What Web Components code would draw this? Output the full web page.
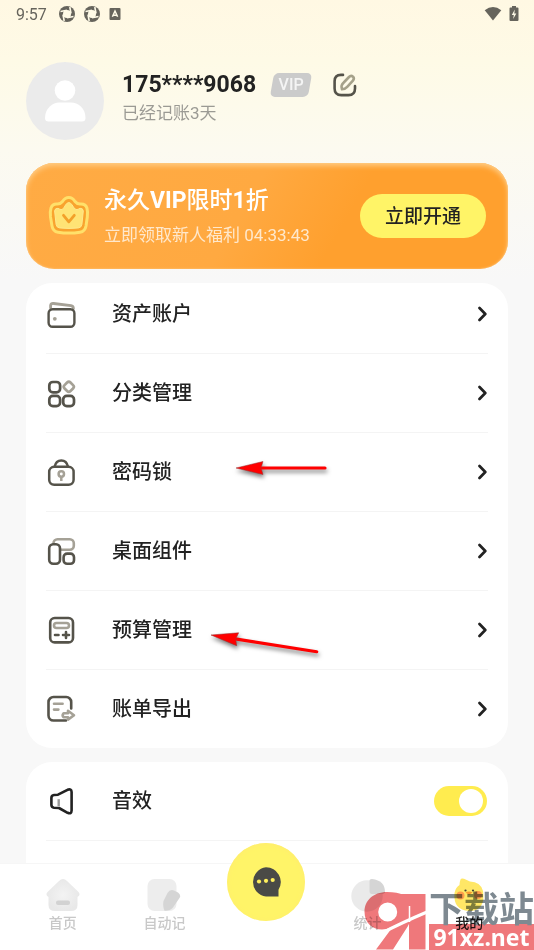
<!DOCTYPE html>
<html lang="zh-CN">
<head>
<meta charset="utf-8">
<meta name="viewport" content="width=device-width, initial-scale=1">
<title>我的</title>
<style>
  html, body { margin: 0; height: 100%; }
  body { font-family: Roboto, "Noto Sans CJK SC", sans-serif; color: #222; background: #f8f8f8; }
</style>
</head>
<body>
<profile-page></profile-page>
<script>
const ICONS = {
  wallet: [30, 30, `<g fill="none" stroke-width="2.4" stroke-linecap="round"><path d="M4.600 9V6.500Q5 4.200 7.600 4.500L25 6.600Q27.300 7 27.400 9.500" stroke="#a5a196" stroke-width="2.800"/><rect x="2.600" y="10.200" width="25.800" height="17.600" rx="4" stroke="#55534a" fill="#fff"/></g><circle cx="8.800" cy="19.800" r="1.900" fill="#a5a196"/>`],
  grid: [30, 30, `<g fill="none" stroke="#55534a" stroke-width="2.700"><rect x="3.300" y="4" width="10.800" height="10.400" rx="3.600"/><rect x="3.300" y="17.800" width="10.800" height="10.400" rx="3.600"/><rect x="17.200" y="17.800" width="10.800" height="10.400" rx="3.600"/><rect x="18.600" y="4.600" width="8.400" height="8.400" rx="2.400" stroke="#a5a196" transform="rotate(45 22.800 8.800)"/></g>`],
  lock: [30, 30, `<g fill="none" stroke="#55534a" stroke-width="2.500"><path d="M8.600 9.800C9.500 5.500 12 3.400 15.300 3.400S21.100 5.500 22 9.800"/><rect x="3.200" y="9.800" width="24.400" height="18" rx="5"/><g stroke="#a5a196"><circle cx="15.300" cy="17" r="2.700"/><path d="M15.300 19.500V24"/></g></g>`],
  widgets: [30, 30, `<g fill="none" stroke-width="2.600"><rect x="7.500" y="3.200" width="20.300" height="10.600" rx="4" stroke="#a5a196"/><g stroke="#55534a" fill="#fff"><rect x="3.200" y="8.200" width="10.800" height="19.600" rx="4"/><rect x="17.600" y="17.600" width="10.400" height="10.200" rx="3.600"/></g></g>`],
  budget: [30, 30, `<g fill="none" stroke="#55534a" stroke-width="2.600" stroke-linecap="round"><rect x="4.200" y="3" width="22.800" height="24.400" rx="4.500"/><rect x="8" y="8" width="15" height="5" rx="2.500" stroke="#a5a196"/><path d="M9 20h3.500M17 20h6M20 17v6"/></g>`],
  exportbill: [30, 30, `<g fill="none" stroke-width="2.600" stroke-linecap="round" stroke-linejoin="round"><path d="M25.200 14.500V8a5 5 0 0 0-5-5H7.500a5 5 0 0 0-5 5v13.500a5 5 0 0 0 5 5H20" stroke="#55534a"/><path d="M8 9.800h8.600M8 15.600h4.400" stroke="#a5a196"/><path d="M17.500 19.300h4.500v-2.500l6 4.400-6 4.400v-2.400h-4.500q-1.700-1.900 0-3.900z" stroke="#a5a196"/></g>`],
  sound: [30, 30, `<path d="M5.400 12Q5.400 9.200 8 9L12 8.700 21.500 3.800Q25.500 2.400 25.600 6V24.500Q25.500 28.400 21.600 26.800L13 22 8 21.800Q5.500 21.500 5.400 19z" fill="none" stroke="#222" stroke-width="2.600" stroke-linejoin="round"/><path d="M12.700 13.200v7" stroke="#999" stroke-width="2.400"/>`],
  chevron: [10, 16, `<path d="M1.500 2L7.300 8L1.500 14" fill="none" stroke="#222" stroke-width="2.700" stroke-linecap="round" stroke-linejoin="round"/>`],
  aperture: [16, 16, `<circle cx="8" cy="8" r="8" fill="#66645c"/><circle cx="8" cy="8" r="4" fill="#fefae7"/><path d="M1.500 5.500L8 4.200M10.800 1L12 7.500M14.500 10.500L8 11.800M5.200 15L4 8.500" stroke="#fefae7" stroke-width="1.600"/>`],
  badgea: [12, 12, `<rect width="11" height="12" x=".5" rx="1" fill="#66645c"/><path d="M3.400 8.800L6 3l2.600 5.800M4.400 7.200h3.200" fill="none" stroke="#fefae7" stroke-width="1.500"/>`],
  wifi: [18, 16, `<path d="M.7 4.200Q9-2.400 17.300 4.200L9 14.600z" fill="#66645c"/>`],
  battery: [10, 16, `<path d="M3 0h4v1.500h1.500q1 0 1 1V14q0 1-1 1h-7q-1 0-1-1V2.500q0-1 1-1H3z" fill="#66645c"/><path d="M5.800 3.500L2.800 9h2l-.6 4L7.300 7.500h-2z" fill="#fefae7"/>`],
  edit: [26, 26, `<g fill="none" stroke-width="2.600" stroke-linecap="round"><path d="M11 2.900H9Q2.600 2.900 2.600 9.300V16.500Q2.600 23.100 9.300 23.100H16.500Q23 23.100 23 16.500V14" stroke="#55534a"/><path d="M10 17.200Q8.500 13.500 11.500 10.700L17 5Q19 3 21 4.700 22.700 6.500 20.900 8.700L15.200 14.800Q13 17.200 10 17.200z" stroke="#a5a18a"/></g>`],
  avatar: [78, 78, `<circle cx="39" cy="39" r="39" fill="#ebebeb"/><circle cx="39" cy="28.500" r="10.300" fill="#fff"/><path d="M19 56C19 46 27 40.500 33 40.500H45C52 40.500 59.500 46 59.500 56Q59.500 59.500 56 59.500H22.500Q19 59.500 19 56z" fill="#fff"/>`],
  crown: [44, 42, `<g stroke-linejoin="round"><path d="M4 13Q5.500 8.500 10.500 9Q13.500 9 15.500 6.500Q18 2.500 21.800 2.500Q25.600 2.500 28 6.500Q30 9 33 9Q38.500 8.500 39.900 13Q41 17 40.300 22L39 31Q38 36.500 33 37.200Q22 39 11 37.200Q6 36.500 5 31L3.500 22Q2.800 17 4 13z" fill="#f9a32e" stroke="#ffe06a" stroke-width="3"/><path d="M7.600 16Q8 13 11 13.300Q13 14.800 15 14.500Q17 13.500 18.500 10Q21.800 5 25.200 10Q26.800 13.500 29 14.500Q31 14.800 33 13.300Q36 13 36.300 16L34.900 29.500Q34.500 32.500 31.500 32.900Q22 34 12.500 32.900Q9.500 32.500 9.100 29.500z" fill="#ffe375" stroke="#ffe98c" stroke-width="1"/></g><path d="M16.500 20.300L21.800 26.800L27.300 20.300" fill="none" stroke="#f3a029" stroke-width="2.800" stroke-linecap="round" stroke-linejoin="round"/>`],
  home: [34, 34, `<defs><radialGradient id="h"><stop offset="0" stop-color="#f3f3f3"/><stop offset="1" stop-color="#e8e8e8"/></radialGradient></defs><path d="M17 1Q19 1 21 3L32.500 14Q35 17 31.500 19V27Q31.500 33 25 33H9Q2.500 33 2.500 27V19Q-1 17 1.500 14L13 3Q15 1 17 1z" fill="url(#h)"/><rect x="10" y="22.500" width="14" height="4.500" rx="2" fill="#d2d2d2"/>`],
  note: [34, 34, `<rect x=".5" y="1" width="29" height="32" rx="7" fill="#ededed"/><path d="M20.500 15Q23 11 27 12.500L31 14.500Q34.500 17 32.500 20L26 29.500Q23 33 17.500 32.800Q15.500 28 16.500 23z" fill="#d5d5d5"/>`],
  chart: [34, 34, `<circle cx="16" cy="18" r="15.700" fill="#eaeaea"/><path d="M18.500 2.500Q18.500 .8 21 .9Q34 2.500 34 14Q33.500 16 30 16H21Q18.500 16 18.500 13z" fill="#d5d5d5"/>`],
  duck: [34, 34, `<path d="M8.500 1.500Q9 .2 12 .8L18 3.500Q28.500 3.600 31 13Q34 33 17 33Q1 32 2.500 15Q3.500 9.500 7.500 7Q7.500 4 8.500 1.500z" fill="#ffe766"/><circle cx="8.500" cy="17.500" r="4" fill="#ff9c4b"/><circle cx="26" cy="17" r="4" fill="#ff9c4b"/><path d="M13.500 14.500Q17 12.500 20.500 14.500L17 17z" fill="#f79a31"/><circle cx="13.500" cy="12.500" r="1.100" fill="#443"/><circle cx="21" cy="12.500" r="1.100" fill="#443"/>`],
  chat: [30, 30, `<path d="M15 .3A14.700 14.700 0 0 0 15 29.500H27.500V22.700A14.700 14.700 0 0 0 15 .3z" fill="#4a4a46"/><g fill="#ffef5d"><circle cx="8" cy="14.500" r="2.100"/><circle cx="15" cy="13.800" r="2.100"/><circle cx="21.700" cy="13" r="2.100"/></g>`],
  mark91: [64, 60, `<g fill="#ef787b"><path fill-rule="evenodd" d="M24 2C10 2 1.500 11 1.500 21.500C1.500 33 9 39.500 19 39.500Q25 39 30 36.500L13 59.500H30L45 36Q51 25 49 15Q45 2 24 2zM24.700 12.500A9.500 9.500 0 1 1 24.700 31.500A9.500 9.500 0 1 1 24.700 12.500z"/><path d="M37 4H62.500V59.500H46V18Q42 9 37 4z"/></g><path d="M18 43.500Q38 33 64 22" fill="none" stroke="#fff" stroke-width="3"/><path d="M46.500 16V32" stroke="#fff" stroke-width="1.500"/>`]
};

function define(name, html, setup) {
  const tpl = document.createElement('template');
  tpl.innerHTML = html;
  customElements.define(name, class extends HTMLElement {
    constructor() {
      super();
      this.attachShadow({ mode: 'open' }).append(tpl.content.cloneNode(true));
    }
    connectedCallback() { if (setup) setup(this, this.shadowRoot); }
  });
}

define('ui-icon', `<style>:host{display:block;flex:none} svg{display:block}</style>`, (el, root) => {
  const [w, h, body] = ICONS[el.getAttribute('name')];
  if (!root.querySelector('svg')) root.innerHTML += `<svg width="${w}" height="${h}" viewBox="0 0 ${w} ${h}" aria-hidden="true">${body}</svg>`;
});

define('status-bar', `
<style>
  :host { display: flex; justify-content: space-between; align-items: center; height: 28px; padding: 0 15px 0 16px; color: #66645c; font-size: 16px; }
  div { display: flex; align-items: center; gap: 9px; }
  time { margin-right: 3px; }
  .sys { gap: 7px; }
</style>
<div><time>9:57</time><ui-icon name="aperture"></ui-icon><ui-icon name="aperture"></ui-icon><ui-icon name="badgea"></ui-icon></div>
<div class="sys"><ui-icon name="wifi"></ui-icon><ui-icon name="battery"></ui-icon></div>`);

define('profile-header', `
<style>
  :host { display: flex; align-items: flex-start; gap: 18px; }
  .copy { padding-top: 7px; }
  .line { display: flex; align-items: center; height: 32px; }
  h1 { margin: 0 14px 0 0; font-size: 23px; line-height: 32px; font-weight: 700; }
  .vip { position: relative; width: 42px; height: 24px; line-height: 24px; text-align: center; font-size: 16px; font-weight: 500; color: #f4f4f4; margin-right: 20px; }
  .vip::before { content: ""; position: absolute; inset: 0 2px; border-radius: 5px; background: #cbcbcb; transform: skewX(-10deg); }
  .vip span { position: relative; }
  button { border: 0; padding: 0; background: none; }
  p { margin: 0; font-size: 17px; line-height: 24px; color: #9b9a94; }
</style>
<ui-icon name="avatar"></ui-icon>
<div class="copy">
  <div class="line"><h1><slot name="name"></slot></h1><div class="vip"><span>VIP</span></div><button aria-label="编辑"><ui-icon name="edit"></ui-icon></button></div>
  <p><slot name="note"></slot></p>
</div>`);

define('vip-banner', `
<style>
  :host { display: flex; align-items: center; padding: 18px 22px 18px 21px; min-height: 70px; border-radius: 28px;
    background: linear-gradient(120deg, #ffab44 0%, #ffa941 45%, #ffa02e 65%);
    box-shadow: inset 0 3px 5px #ffca80, inset 0 0 2px #ffc987; }
  .copy { flex: 1; margin-left: 13px; padding-top: 2px; }
  h2 { margin: 0; font-size: 23px; line-height: 36px; font-weight: 500; color: #fff; }
  p { margin: 0; font-size: 17px; line-height: 32px; color: #ffe8cc; }
  button { border: 0; padding: 1px 25px 0; height: 44px; border-radius: 22px; background: #fff467; color: #222; font: 500 19px/43px Roboto, "Noto Sans CJK SC", sans-serif; }
</style>
<ui-icon name="crown"></ui-icon>
<div class="copy"><h2><slot name="title"></slot></h2><p><slot name="note"></slot></p></div>
<button><slot name="action"></slot></button>`);

define('menu-card', `
<style>
  :host { display: block; background: #fff; border-radius: 26px; padding: 0 20px; }
</style><slot></slot>`);

define('menu-row', `
<style>
  :host { display: block; border-bottom: 1px solid #f4f4f4; }
  :host([last]) { border-bottom: 0; }
  :host([first]) a { padding-top: 16px; }
  a, label { display: flex; align-items: center; gap: 36px; padding: 24px 0; height: 30px; color: #222; text-decoration: none; font-size: 20px; line-height: 30px; font-weight: 500; }
  .text { flex: 1; }
  input { appearance: none; margin: 0 1px 0 0; width: 53px; height: 30px; border-radius: 15px; background: #ddd; display: flex; align-items: center; padding: 0 4px; box-sizing: border-box; }
  input::before { content: ""; width: 24px; height: 24px; border-radius: 50%; background: #fff; }
  input:checked { background: #ffec4f; justify-content: flex-end; }
</style>`, (el, root) => {
  if (root.querySelector('.text')) return;
  const inner = `<ui-icon name="${el.getAttribute('icon')}"></ui-icon><span class="text"><slot></slot></span>`;
  root.innerHTML += el.hasAttribute('toggle')
    ? `<label>${inner}<input type="checkbox" role="switch" checked></label>`
    : `<a href="#">${inner}<ui-icon name="chevron"></ui-icon></a>`;
});

define('tab-item', `
<style>
  :host { display: block; flex: 1; }
  a { display: flex; flex-direction: column; align-items: center; color: #c8c8c8; text-decoration: none; font-size: 14px; line-height: 22px; font-weight: 500; }
  :host([active]) a { color: #222; }
</style>
<a href="#"><slot name="icon"></slot><slot></slot></a>`);

define('tab-bar', `
<style>
  :host { display: flex; position: relative; background: #fff; border-top: 1px solid #f6f6f6; padding: 14px 14px 16px 12px; min-height: 56px; }
  .add { flex: 1; display: flex; justify-content: center; }
  button { border: 0; padding: 0; width: 78px; height: 78px; margin: -35px 0 -20px; border-radius: 50%; background: #fff468; box-shadow: inset 0 1px 5px #ffec70; display: flex; align-items: center; justify-content: center; }
</style>
<tab-item><ui-icon slot="icon" name="home"></ui-icon>首页</tab-item>
<tab-item><ui-icon slot="icon" name="note"></ui-icon>自动记</tab-item>
<div class="add"><button aria-label="记一笔"><ui-icon name="chat"></ui-icon></button></div>
<tab-item><ui-icon slot="icon" name="chart"></ui-icon>统计</tab-item>
<tab-item active><ui-icon slot="icon" name="duck"></ui-icon>我的</tab-item>`);

define('site-mark', `
<style>
  :host { display: flex; align-items: flex-end; gap: 2px; position: absolute; right: 0; bottom: 0; mix-blend-mode: multiply; pointer-events: none; }
  .cn { font: 700 35px/34px "Noto Sans CJK SC", sans-serif; color: #7e8991; white-space: nowrap; }
  .url { background: #ef787b; color: #fff; font: 700 23px/26px "Noto Sans", sans-serif; text-align: center; }
</style>
<ui-icon name="mark91"></ui-icon>
<div><div class="cn">下载站</div><div class="url">91xz.net</div></div>`);

define('pointer-arrow', `
<style>
  :host { position: absolute; pointer-events: none; }
  svg { display: block; overflow: visible; filter: drop-shadow(1px 3px 2px rgba(0,0,0,.5)); }
</style>
<svg width="92" height="14" viewBox="0 0 92 14" aria-hidden="true"><g><path d="M26 7H89" stroke="#f00" stroke-width="3.200" stroke-linecap="round"/><path d="M0 7L27 .5L25 7L27 13.500z" fill="#f00" stroke="#933" stroke-width=".5"/></g></svg>`, (el, root) => {
  const slope = el.getAttribute('slope');
  if (slope) {
    root.querySelector('g').setAttribute('transform', `rotate(${slope} 0 7)`);
    root.querySelector('path').setAttribute('d', 'M26 7H107');
  }
});

define('profile-page', `
<style>
  :host { display: flex; flex-direction: column; height: 100vh; position: relative; overflow: hidden;
    background: linear-gradient(#fff8e3 0, #fefae6 60px, #fcfaf0 150px, #f8f8f8 280px); }
  main { flex: 1; min-height: 0; overflow-y: auto; scrollbar-width: none; padding: 34px 26px 0; position: relative; }
  vip-banner { margin: 23px 0 14px; }
  b { font-weight: 700; }
  menu-card + menu-card { margin-top: 14px; border-radius: 26px 26px 0 0; padding-bottom: 40px; }
  .one { left: 236px; top: 433px; }
  .two { left: 211px; top: 600px; }
</style>
<status-bar></status-bar>
<main>
  <profile-header><span slot="name">175****9068</span><span slot="note">已经记账3天</span></profile-header>
  <vip-banner><span slot="title">永久<b>VIP</b>限时<b>1</b>折</span><span slot="note">立即领取新人福利 04:33:43</span><span slot="action">立即开通</span></vip-banner>
  <menu-card>
    <menu-row first icon="wallet">资产账户</menu-row>
    <menu-row icon="grid">分类管理</menu-row>
    <menu-row icon="lock">密码锁</menu-row>
    <menu-row icon="widgets">桌面组件</menu-row>
    <menu-row icon="budget">预算管理</menu-row>
    <menu-row last icon="exportbill">账单导出</menu-row>
  </menu-card>
  <menu-card><menu-row toggle icon="sound">音效</menu-row></menu-card>
  <pointer-arrow class="one"></pointer-arrow>
  <pointer-arrow class="two" slope="9"></pointer-arrow>
</main>
<tab-bar></tab-bar>
<site-mark></site-mark>`);
</script>
</body>
</html>
